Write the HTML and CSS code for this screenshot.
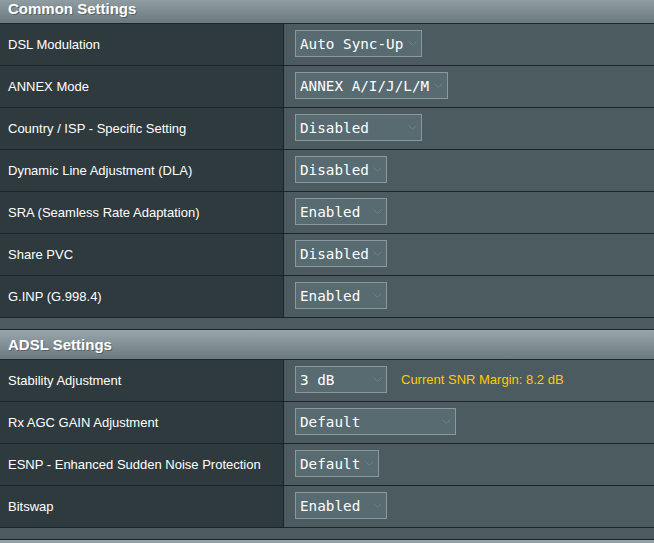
FILE: index.html
```html
<!DOCTYPE html>
<html>
<head>
<meta charset="utf-8">
<link rel="stylesheet" href="styles.css">
</head>
<body>
<div class="page">
  <section class="section">
    <div class="head">Common Settings</div>
    <div class="row"><div class="label">DSL Modulation</div><div class="value"><div class="select w127"><span>Auto Sync-Up</span><svg class="chev" width="9" height="5" viewBox="0 0 9 5"><polyline points="0.5,0.5 4.5,4.5 8.5,0.5"/></svg></div></div></div>
    <div class="row"><div class="label">ANNEX Mode</div><div class="value"><div class="select w153"><span>ANNEX A/I/J/L/M</span><svg class="chev" width="9" height="5" viewBox="0 0 9 5"><polyline points="0.5,0.5 4.5,4.5 8.5,0.5"/></svg></div></div></div>
    <div class="row"><div class="label">Country / ISP - Specific Setting</div><div class="value"><div class="select w127"><span>Disabled</span><svg class="chev" width="9" height="5" viewBox="0 0 9 5"><polyline points="0.5,0.5 4.5,4.5 8.5,0.5"/></svg></div></div></div>
    <div class="row"><div class="label">Dynamic Line Adjustment (DLA)</div><div class="value"><div class="select w92"><span>Disabled</span><svg class="chev" width="9" height="5" viewBox="0 0 9 5"><polyline points="0.5,0.5 4.5,4.5 8.5,0.5"/></svg></div></div></div>
    <div class="row"><div class="label">SRA (Seamless Rate Adaptation)</div><div class="value"><div class="select w92"><span>Enabled</span><svg class="chev" width="9" height="5" viewBox="0 0 9 5"><polyline points="0.5,0.5 4.5,4.5 8.5,0.5"/></svg></div></div></div>
    <div class="row"><div class="label">Share PVC</div><div class="value"><div class="select w92"><span>Disabled</span><svg class="chev" width="9" height="5" viewBox="0 0 9 5"><polyline points="0.5,0.5 4.5,4.5 8.5,0.5"/></svg></div></div></div>
    <div class="row"><div class="label">G.INP (G.998.4)</div><div class="value"><div class="select w92"><span>Enabled</span><svg class="chev" width="9" height="5" viewBox="0 0 9 5"><polyline points="0.5,0.5 4.5,4.5 8.5,0.5"/></svg></div></div></div>
  </section>
  <section class="section">
    <div class="head">ADSL Settings</div>
    <div class="row"><div class="label">Stability Adjustment</div><div class="value"><div class="select w92"><span>3 dB</span><svg class="chev" width="9" height="5" viewBox="0 0 9 5"><polyline points="0.5,0.5 4.5,4.5 8.5,0.5"/></svg></div><span class="snr">Current SNR Margin: 8.2 dB</span></div></div>
    <div class="row"><div class="label">Rx AGC GAIN Adjustment</div><div class="value"><div class="select w161"><span>Default</span><svg class="chev" width="9" height="5" viewBox="0 0 9 5"><polyline points="0.5,0.5 4.5,4.5 8.5,0.5"/></svg></div></div></div>
    <div class="row"><div class="label">ESNP - Enhanced Sudden Noise Protection</div><div class="value"><div class="select w84"><span>Default</span><svg class="chev" width="9" height="5" viewBox="0 0 9 5"><polyline points="0.5,0.5 4.5,4.5 8.5,0.5"/></svg></div></div></div>
    <div class="row"><div class="label">Bitswap</div><div class="value"><div class="select w92"><span>Enabled</span><svg class="chev" width="9" height="5" viewBox="0 0 9 5"><polyline points="0.5,0.5 4.5,4.5 8.5,0.5"/></svg></div></div></div>
  </section>
  <section class="section">
    <div class="head"></div>
  </section>
</div>
</body>
</html>
```

FILE: styles.css
```css
html, body {
  margin: 0;
  padding: 0;
  background: #4d5a5e;
  overflow: hidden;
}

.page {
  margin-top: -7px;
  width: 654px;
  font-family: "Liberation Sans", Arial, sans-serif;
  color: #fff;
}

.section {
  border-top: 1px solid #1d2528;
  margin-bottom: 11px;
}

.head {
  box-sizing: border-box;
  border-bottom: 1px solid #1d2528;
  height: 30px;
  padding-left: 8px;
  display: flex;
  align-items: center;
  font-size: 15px;
  font-weight: bold;
  background: linear-gradient(#98a5aa, #6c7a80);
  text-shadow: 1px 1px 0 rgba(40, 50, 55, 0.45);
}

.row {
  display: grid;
  grid-template-columns: 284px 1fr;
  height: 42px;
  box-sizing: border-box;
  border-bottom: 1px solid #1d2528;
}

.label {
  background: #2f3a3e;
  border-right: 1px solid #1d2528;
  display: flex;
  align-items: center;
  padding-left: 8px;
  padding-bottom: 1px;
  font-size: 13px;
}

.value {
  background: #4b5b60;
  display: flex;
  align-items: center;
  padding-left: 11px;
  padding-bottom: 2px;
}

.select {
  box-sizing: border-box;
  height: 27px;
  border: 1px solid #8b979a;
  background: #576b71;
  display: flex;
  align-items: center;
  justify-content: space-between;
  padding: 0 4px 0 4px;
  font-family: "DejaVu Sans Mono", "Liberation Mono", monospace;
  font-size: 14.3px;
  color: #fff;
}

.chev {
  flex: none;
  fill: none;
  stroke: #6f8186;
  stroke-width: 1;
}

.w84 { width: 84px; }
.w92 { width: 92px; }
.w127 { width: 127px; }
.w153 { width: 153px; }
.w161 { width: 161px; }

.snr {
  margin-left: 14px;
  font-size: 13px;
  color: #ffcc00;
}
```
